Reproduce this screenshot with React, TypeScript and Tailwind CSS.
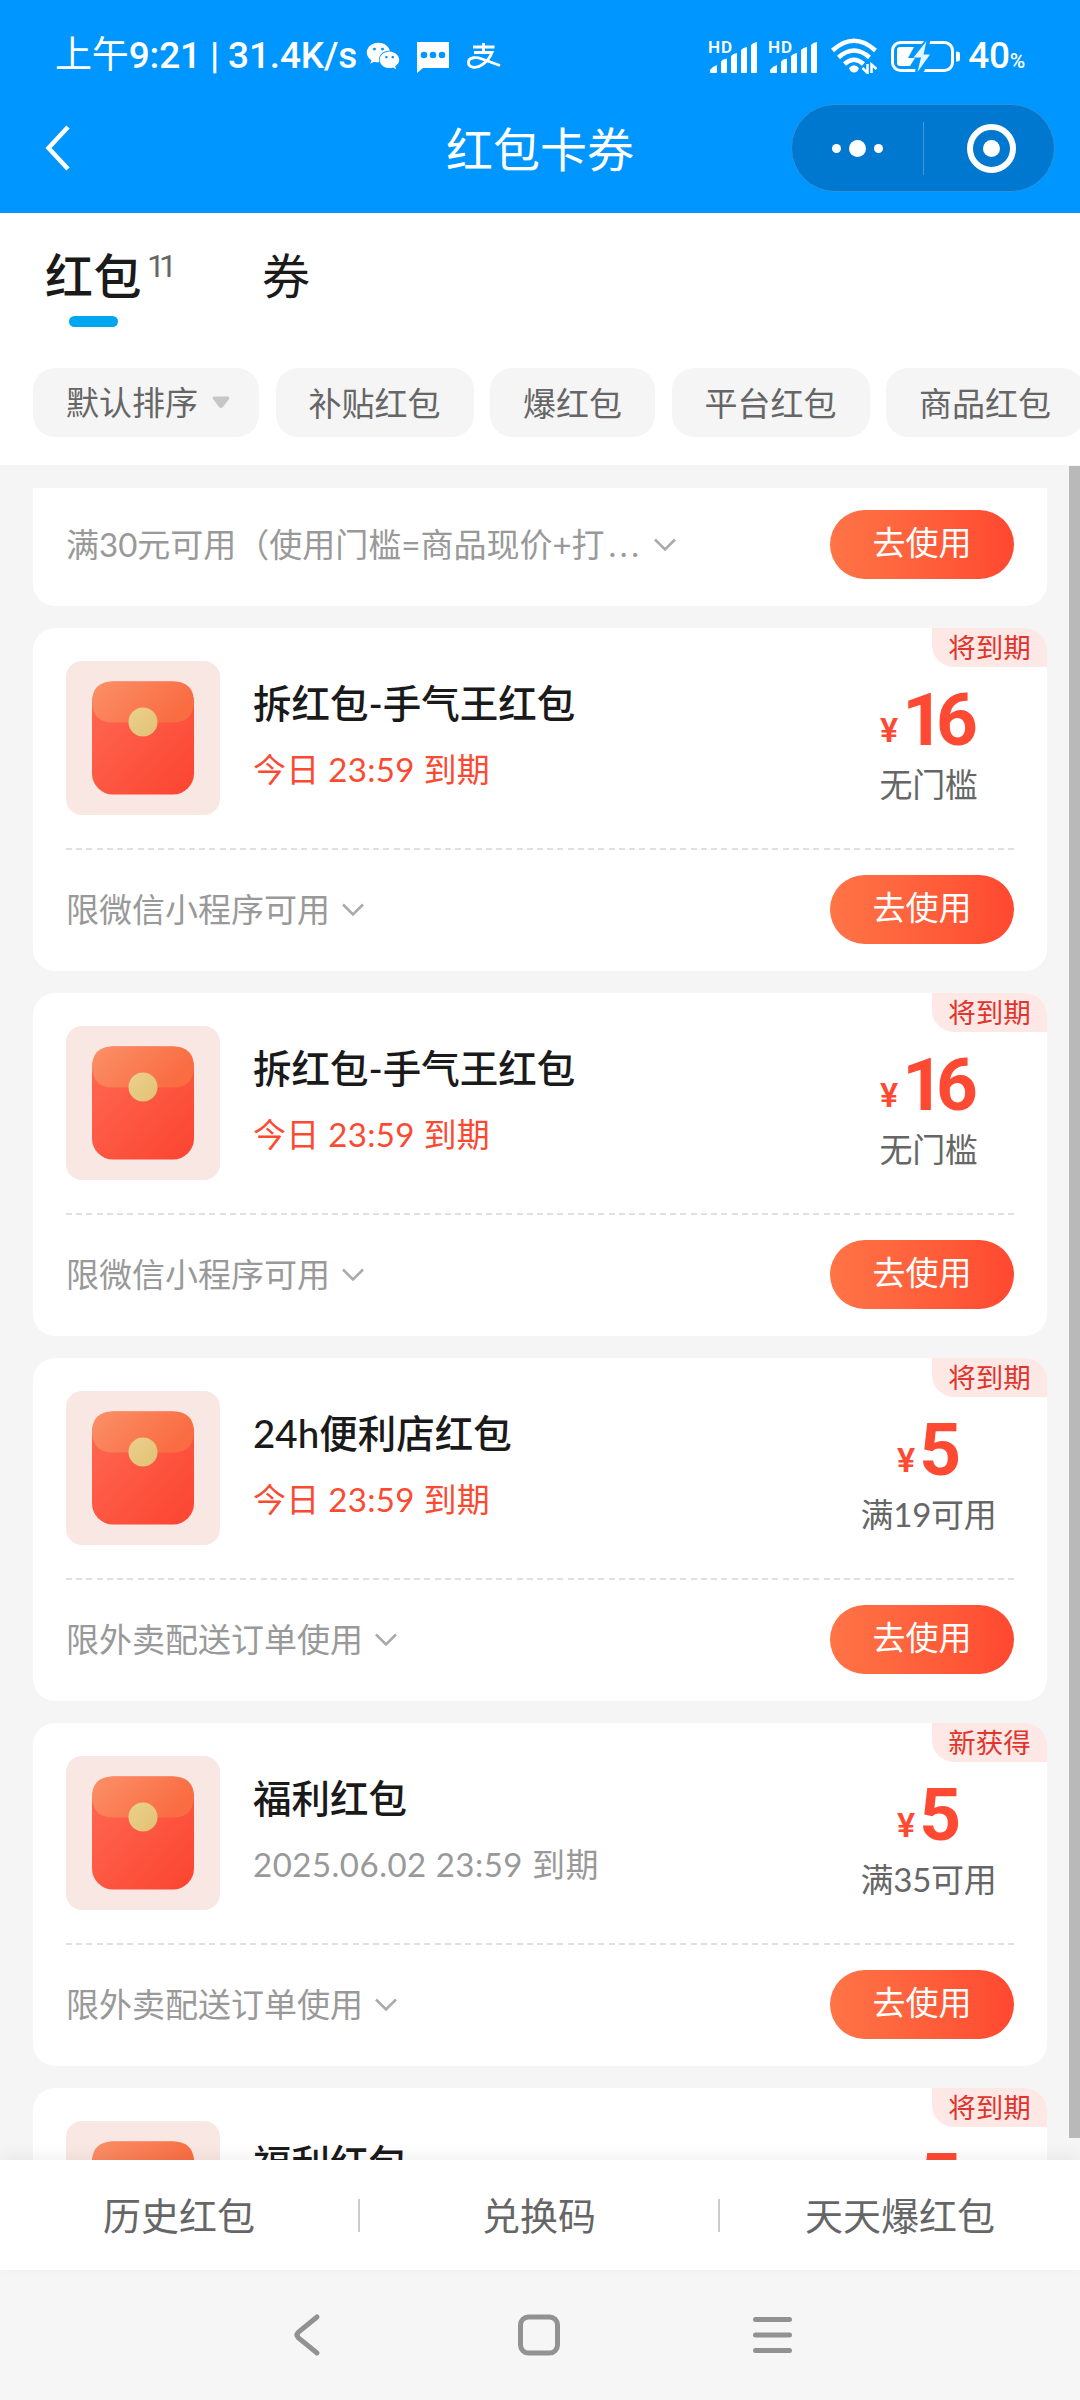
import { FaWeixin } from "react-icons/fa";

interface Coupon {
  title: string;
  expiry: string;
  urgent: boolean;
  tag: string;
  amount: string;
  threshold: string;
  rule: string;
}

const COUPONS: Coupon[] = [
  {
    title: "拆红包-手气王红包",
    expiry: "今日 23:59 到期",
    urgent: true,
    tag: "将到期",
    amount: "16",
    threshold: "无门槛",
    rule: "限微信小程序可用",
  },
  {
    title: "拆红包-手气王红包",
    expiry: "今日 23:59 到期",
    urgent: true,
    tag: "将到期",
    amount: "16",
    threshold: "无门槛",
    rule: "限微信小程序可用",
  },
  {
    title: "24h便利店红包",
    expiry: "今日 23:59 到期",
    urgent: true,
    tag: "将到期",
    amount: "5",
    threshold: "满19可用",
    rule: "限外卖配送订单使用",
  },
  {
    title: "福利红包",
    expiry: "2025.06.02 23:59 到期",
    urgent: false,
    tag: "新获得",
    amount: "5",
    threshold: "满35可用",
    rule: "限外卖配送订单使用",
  },
  {
    title: "福利红包",
    expiry: "今日 23:59 到期",
    urgent: true,
    tag: "将到期",
    amount: "5",
    threshold: "满35可用",
    rule: "限外卖配送订单使用",
  },
];

const FILTERS = ["补贴红包", "爆红包", "平台红包", "商品红包"];

const FOOTER_LINKS = ["历史红包", "兑换码", "天天爆红包"];

function Signal() {
  return (
    <svg width="52" height="36" viewBox="0 0 52 36" className="shrink-0" fill="#fff">
      <text x="0" y="14.500" fontSize="17" fontWeight="600" fontFamily="Roboto, sans-serif" textLength="24">
        HD
      </text>
      <path d="M2 34v-2q3-4 7-5v7q0 1-1 1H3q-1 0-1-1z" />
      <path d="M13 34V23.500q2-2.500 6-3V34q0 1-1 1h-4q-1 0-1-1z" />
      <path d="M23 34V18q2-2.500 6-3v19q0 1-1 1h-4q-1 0-1-1z" />
      <path d="M33 34V12q2-2.500 6-3v25q0 1-1 1h-4q-1 0-1-1z" />
      <path d="M43 34V7q2-2.500 6-3v30q0 1-1 1h-4q-1 0-1-1z" />
    </svg>
  );
}

function Wifi() {
  return (
    <svg width="48" height="37" viewBox="0 0 48 37" className="shrink-0" fill="none" stroke="#fff" strokeWidth="4.500">
      <path d="M2.500 13.500Q24-6 45.500 13.500" />
      <path d="M8.500 20.500Q24 6.500 39.500 20.500" />
      <path d="M14.500 27Q24 18.500 33.500 27" />
      <path d="M19 31q5-5.500 10 0-1.500 4.500-5 4.500T19 31z" fill="#fff" stroke="none" />
      <path d="M37.500 27v9l-5-5M41.500 36v-8.500l5 4.500" strokeWidth="2.500" />
    </svg>
  );
}

function Battery() {
  return (
    <svg width="70" height="34" viewBox="0 0 70 34" className="shrink-0">
      <rect x="1.500" y="3.500" width="60" height="28" rx="8" fill="none" stroke="#fff" strokeWidth="3" />
      <path d="M65 12.500q4 0 4 2v6q0 2-4 2z" fill="#fff" />
      <path d="M6 11q0-3 3-3h14l-6 11h7l-5 8H9q-3 0-3-3z" fill="#fff" />
      <path d="M35 0L19 18.500h7L24 34h8L42 16h-7l5-16z" fill="#0096ff" />
      <path d="M35.500 2L22.500 18.500h7.500L26.500 33 39 15.500h-6.500z" fill="#e3f5ff" />
    </svg>
  );
}

function StatusBar() {
  return (
    <div className="flex h-[108px] items-center pl-[55px] pt-[3px] text-white">
      <span className="font-['Roboto','Noto_Sans_CJK_SC',sans-serif] text-[37px] font-medium leading-none tracking-[-0.150px] whitespace-nowrap">
        <span className="font-normal">上午</span>9:21 | 31.4K/s
      </span>
      <FaWeixin className="ml-[9px] size-[34px]" />
      <svg width="34" height="32" viewBox="0 0 34 32" className="ml-[16px] mt-[2px]">
        <path d="M1 1h32v26H7l-6 5z" fill="#fff" />
        <g fill="#0096ff">
          <circle cx="8" cy="14" r="3.300" />
          <circle cx="17" cy="14" r="3.300" />
          <circle cx="26" cy="14" r="3.300" />
        </g>
      </svg>
      <svg width="34" height="26" viewBox="0 0 34 26" className="ml-[17px]" fill="none" stroke="#fff" strokeWidth="2.800">
        <path d="M16.500 0v9M6 4h21.500M7 9.500h18Q22 17 15.500 21.500C10 25.500 1.500 25.500 1.500 19.500 1.500 13.500 10 14 15 16l18 6.500" />
      </svg>
      <div className="ml-auto flex items-center pr-[55px]">
        <Signal />
        <div className="w-[8px]" />
        <Signal />
        <div className="w-[10px]" />
        <Wifi />
        <div className="w-[13px]" />
        <Battery />
        <span className="ml-[7px] font-['Roboto',sans-serif] text-[37px] font-medium leading-none tracking-[-0.250px]">
          40<span className="text-[21px]">%</span>
        </span>
      </div>
    </div>
  );
}

function TitleBar() {
  return (
    <div className="grid h-[105px] grid-cols-3 items-start text-white">
      <svg width="30" height="50" viewBox="0 0 30 50" className="ml-[43px] mt-[15px]">
        <path d="M25 4L5.500 25 25 46" fill="none" stroke="#fff" strokeWidth="4.500" />
      </svg>
      <h1 className="mt-[13px] text-center text-[47px] leading-[56px]">红包卡券</h1>
      <div className="mr-[25px] -mt-[4px] flex h-[88px] w-[264px] items-center justify-self-end rounded-full border border-[#2b93dd] bg-[#0078cf]">
        <div className="flex flex-1 items-center justify-center gap-[8px]">
          <span className="size-[9px] rounded-full bg-white" />
          <span className="size-[17px] rounded-full bg-white" />
          <span className="size-[9px] rounded-full bg-white" />
        </div>
        <div className="h-[53px] w-px bg-[#3d9adb]" />
        <div className="flex w-[130px] items-center justify-center pl-[5px]">
          <div className="flex size-[49px] items-center justify-center rounded-full border-[6px] border-white">
            <span className="size-[17px] rounded-full bg-white" />
          </div>
        </div>
      </div>
    </div>
  );
}

function Chevron() {
  return (
    <svg width="24" height="16" viewBox="0 0 24 16" className="ml-[11px] shrink-0">
      <path d="M2 2.500l10 10 10-10" fill="none" stroke="#aaa" strokeWidth="2.500" />
    </svg>
  );
}

function RuleRow({ text, truncated = false }: { text: string; truncated?: boolean }) {
  return (
    <div className="flex h-[69px] items-center">
      <span className="mb-[2px] text-[33px] leading-[46px] text-[#999] whitespace-nowrap">
        {text}
        {truncated && <span className="ml-[4px] tracking-[3.500px]">...</span>}
      </span>
      <Chevron />
      <button className="ml-auto h-[69px] w-[184px] rounded-full bg-linear-to-r from-[#ff7446] to-[#ff4830] text-[33px] leading-[64px] text-white">
        <span className="block h-[69px]">去使用</span>
      </button>
    </div>
  );
}

function Envelope() {
  return (
    <svg width="154" height="154" viewBox="0 0 154 154" className="shrink-0">
      <defs>
        <linearGradient id="body" x1="0" y1="0" x2="1" y2="1">
          <stop offset="0" stopColor="#ff6a54" />
          <stop offset="1" stopColor="#fb4430" />
        </linearGradient>
        <linearGradient id="flap" x1="0" y1="0" x2="1" y2="0.400">
          <stop offset="0" stopColor="#fb9068" />
          <stop offset="1" stopColor="#fa6c42" />
        </linearGradient>
        <linearGradient id="seal" x1="0" y1="0" x2="1" y2="1">
          <stop offset="0" stopColor="#ebd08c" />
          <stop offset="1" stopColor="#e2c174" />
        </linearGradient>
      </defs>
      <rect width="154" height="154" rx="16" fill="#f9e7e3" />
      <rect x="26" y="20.500" width="102" height="113" rx="21" fill="url(#body)" />
      <path d="M26 41.500q0-21 21-21h60q21 0 21 21-1 20-21 20H47q-20 0-21-20z" fill="url(#flap)" />
      <circle cx="77" cy="61" r="14.500" fill="url(#seal)" />
    </svg>
  );
}

function CouponCard({ coupon }: { coupon: Coupon }) {
  return (
    <div className="relative h-[343px] shrink-0 rounded-[22px] bg-white px-[33px] pt-[33px]">
      <div className="absolute right-0 top-0 h-[39px] w-[115px] rounded-bl-[22px] rounded-tr-[22px] bg-[#fee8e6] text-center text-[27.500px] leading-[40px] text-[#e0352c]">
        {coupon.tag}
      </div>
      <div className="flex h-[154px]">
        <Envelope />
        <div className="ml-[33px] flex-1">
          <div className="mt-[15px] text-[38.500px] font-medium leading-[54px] text-[#1a1a1a]">{coupon.title}</div>
          <div
            className={`mt-[16px] text-[33px] leading-[46px] ${
              coupon.urgent ? "tracking-[0.300px] text-[#fb4a32]" : "tracking-[0.500px] text-[#999]"
            }`}
          >
            {coupon.expiry}
          </div>
        </div>
        <div className="-mr-[33px] flex w-[237px] flex-col items-center">
          <div className="mt-[20px] flex h-[78px] items-baseline pr-[7px] font-['Roboto',sans-serif] font-bold leading-[78px] text-[#ff4a33]">
            <span className="mr-[4px] -translate-y-[3px] text-[34px] font-semibold">¥</span>
            <span className="text-[73px] tracking-[-8px]">{coupon.amount}</span>
          </div>
          <div className="mt-[2px] text-[33px] leading-[46px] tracking-[-0.300px] text-[#666]">{coupon.threshold}</div>
        </div>
      </div>
      <div className="mt-[33px] mb-[25px] h-[2px] bg-[repeating-linear-gradient(90deg,#e0e0e0_0_6px,transparent_6px_10.239px)]" />
      <RuleRow text={coupon.rule} />
    </div>
  );
}

export default function App() {
  return (
    <div className="flex h-[2400px] w-[1080px] flex-col overflow-hidden bg-white font-['Lato','Noto_Sans_CJK_SC',sans-serif]">
      <header className="h-[213px] shrink-0 bg-[#0096ff]">
        <StatusBar />
        <TitleBar />
      </header>

      {/* Tabs + filter chips */}
      <section className="h-[252px] shrink-0 bg-white">
        <div className="flex h-[155px] pl-[45px] pt-[28px]">
          <div className="flex w-[97px] flex-col items-center">
            <span className="text-[48px] font-medium leading-[70px] tracking-[0.500px] text-[#1a1a1a]">红包</span>
            <span className="mt-[5px] h-[11px] w-[49px] rounded-full bg-[#00a6f0]" />
          </div>
          <span className="ml-[5px] mt-[2px] w-[26px] font-['Roboto',sans-serif] text-[32px] leading-[46px] tracking-[-6px] text-[#666]">
            11
          </span>
          <span className="ml-[89px] text-[48px] leading-[70px] text-[#1a1a1a]">券</span>
        </div>
        <div className="flex gap-[16.500px] overflow-hidden pl-[33px] text-[33px] leading-[71px] text-[#666]">
          <div className="flex h-[69px] shrink-0 items-center rounded-[22px] bg-[#f5f5f5] pl-[33px] pr-[29px]">
            默认排序
            <svg width="18" height="13" viewBox="0 0 18 13" className="ml-[14px]">
              <path d="M2 0.500h14q2 0.500 1 2.500l-6 8q-2 2-4 0L1 3Q0 1 2 0.500z" fill="#c6c6c6" />
            </svg>
          </div>
          {FILTERS.map((label) => (
            <div key={label} className="h-[69px] shrink-0 rounded-[22px] bg-[#f5f5f5] px-[33px]">
              {label}
            </div>
          ))}
        </div>
      </section>

      {/* Coupon list */}
      <main className="relative flex min-h-0 flex-1 flex-col gap-[22px] overflow-hidden bg-[#f5f5f5] px-[33px] pt-[23px]">
        <div className="h-[118px] shrink-0 rounded-b-[22px] bg-white px-[33px] pt-[22px]">
          <RuleRow text="满30元可用（使用门槛=商品现价+打" truncated />
        </div>
        {COUPONS.map((coupon, i) => (
          <CouponCard key={i} coupon={coupon} />
        ))}
        <div className="absolute right-0 top-[1px] h-[1672px] w-[11px] bg-[#b9b9b9]" />
      </main>

      <footer className="relative grid h-[110px] shrink-0 grid-cols-3 items-center bg-white text-[38px] text-[#666] shadow-[0_-4px_16px_rgba(0,0,0,0.06)]">
        {FOOTER_LINKS.map((label) => (
          <div key={label} className="border-r-2 border-[#ccc] text-center leading-[33px] last:border-r-0">
            {label}
          </div>
        ))}
      </footer>

      {/* System navigation */}
      <nav className="flex h-[130px] shrink-0 items-center bg-[#f6f6f6] pl-[291px]">
        <svg width="505" height="50" viewBox="0 0 505 50" fill="none" stroke="#929292" strokeWidth="5" strokeLinecap="round">
          <path d="M26 7L7.500 22q-3 3 0 6L26 43" />
          <rect x="229.500" y="7" width="37" height="36" rx="8" />
          <path d="M464.500 9.500h34M464.500 25h34M464.500 40.500h34" />
        </svg>
      </nav>
    </div>
  );
}
